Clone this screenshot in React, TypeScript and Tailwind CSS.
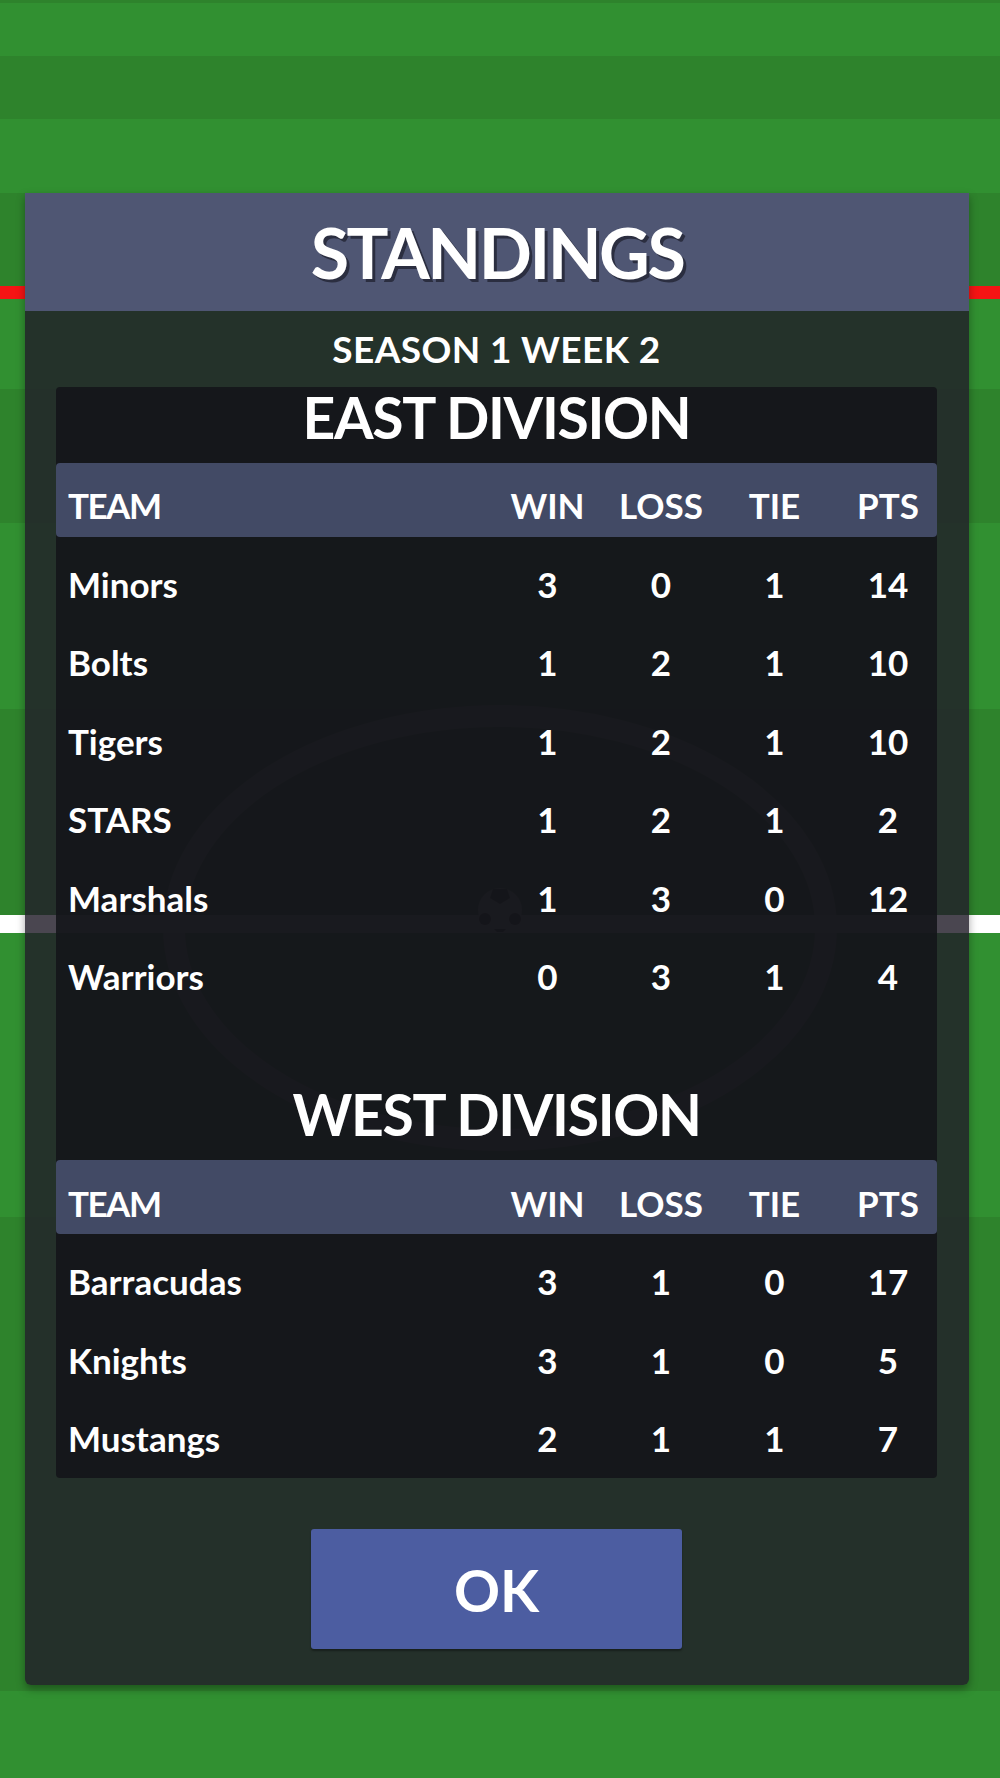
import React from 'react';

type TeamRow = { name: string; win: number; loss: number; tie: number; pts: number };

const east: TeamRow[] = [
  { name: 'Minors', win: 3, loss: 0, tie: 1, pts: 14 },
  { name: 'Bolts', win: 1, loss: 2, tie: 1, pts: 10 },
  { name: 'Tigers', win: 1, loss: 2, tie: 1, pts: 10 },
  { name: 'STARS', win: 1, loss: 2, tie: 1, pts: 2 },
  { name: 'Marshals', win: 1, loss: 3, tie: 0, pts: 12 },
  { name: 'Warriors', win: 0, loss: 3, tie: 1, pts: 4 },
];

const west: TeamRow[] = [
  { name: 'Barracudas', win: 3, loss: 1, tie: 0, pts: 17 },
  { name: 'Knights', win: 3, loss: 1, tie: 0, pts: 5 },
  { name: 'Mustangs', win: 2, loss: 1, tie: 1, pts: 7 },
];

const cols = 'grid grid-cols-[minmax(0,1fr)_113px_114px_113px_106px] items-center';

// grass stripes, top to bottom
function Field() {
  return (
    <div className="flex flex-col">
      <div className="h-[3px] bg-[#2e832c]" />
      <div className="h-[53px] bg-[#319031]" />
      <div className="h-[63px] bg-[#2e832c]" />
      <div className="h-[74px] bg-[#319031]" />
      <div className="h-[93px] bg-[#2e832c]" />
      <div className="h-[13px] bg-[#f51414]" />
      <div className="h-[90px] bg-[#319031]" />
      <div className="h-[134px] bg-[#2e832c]" />
      <div className="h-[186px] bg-[#319031]" />
      <div className="h-[206px] bg-[#2e832c]" />
      <div className="h-[18px] bg-white" />
      <div className="h-[284px] bg-[#319031]" />
      <div className="h-[474px] bg-[#2e832c]" />
      <div className="h-[87px] bg-[#319031]" />
    </div>
  );
}

function Division({ title, rows, className }: { title: string; rows: TeamRow[]; className?: string }) {
  return (
    <div className={className}>
      <div className="h-[76px] flex justify-center">
        <h2 className="text-[57px] leading-[61px] font-bold tracking-[-1.3px]">{title}</h2>
      </div>
      <div className={`${cols} h-[74px] pt-[11px] bg-[#424a65] rounded-[4px] text-[35px] font-bold`}>
        <div className="pl-[12px] tracking-[-1.5px]">TEAM</div>
        <div className="text-center">WIN</div>
        <div className="text-center">LOSS</div>
        <div className="text-center">TIE</div>
        <div className="text-center pl-[8px]">PTS</div>
      </div>
      <div className="mt-[8px]">
        {rows.map((r) => (
          <div key={r.name} className={`${cols} h-[78.4px] text-[35px] font-bold`}>
            <div className="pl-[12px]">{r.name}</div>
            <div className="text-center">{r.win}</div>
            <div className="text-center">{r.loss}</div>
            <div className="text-center">{r.tie}</div>
            <div className="text-center pl-[8px]">{r.pts}</div>
          </div>
        ))}
      </div>
    </div>
  );
}

export default function App() {
  return (
    <div className="relative w-[1000px] h-[1778px] overflow-hidden font-[Lato,sans-serif] text-white">
      <Field />

      {/* centre circle and ball, seen through the dialog */}
      <svg className="absolute inset-0" width="1000" height="1778" viewBox="0 0 1000 1778">
        <ellipse cx="500" cy="928" rx="326" ry="212" fill="none" stroke="#ffffff" strokeOpacity="0.75" strokeWidth="22" />
        <circle cx="500" cy="910" r="22" fill="#ffffff" />
        <path d="M493 889 L507 889 L510 898 L500 904 L490 898 Z" fill="#000000" />
        <circle cx="485" cy="919" r="6" fill="#000000" />
        <circle cx="515" cy="919" r="6" fill="#000000" />
        <path d="M494 929 L506 929 L503 932 L497 932 Z" fill="#000000" />
      </svg>

      <div className="absolute left-[25px] top-[193px] w-[944px] shadow-[0_4px_8px_rgba(0,0,0,0.35)] rounded-b-[6px]">
        <div className="h-[118px] bg-[#4f5673] flex items-center justify-center">
          <h1 className="text-[70px] leading-none font-bold tracking-[-2.5px] [text-shadow:3px_3px_0_#2b2e40]">STANDINGS</h1>
        </div>
        <div className="bg-[rgba(34,29,41,0.82)] rounded-b-[6px] pl-[31px] pr-[32px] pb-[36px]">
          <div className="h-[76px] flex items-center justify-center text-[37px] font-bold tracking-[0.4px]">SEASON 1 WEEK 2</div>
          <div className="bg-[rgba(20,21,26,0.9)] rounded-[4px]">
            <Division title="EAST DIVISION" rows={east} />
            <Division title="WEST DIVISION" rows={west} className="mt-[69px]" />
          </div>
          <div className="mt-[51px] flex justify-center">
            <button className="w-[371px] h-[120px] pt-[5px] bg-[#4c5da1] rounded-[3px] shadow-[0_2px_2px_rgba(0,0,0,0.35)] text-[57px] font-bold text-white">
              OK
            </button>
          </div>
        </div>
      </div>
    </div>
  );
}
